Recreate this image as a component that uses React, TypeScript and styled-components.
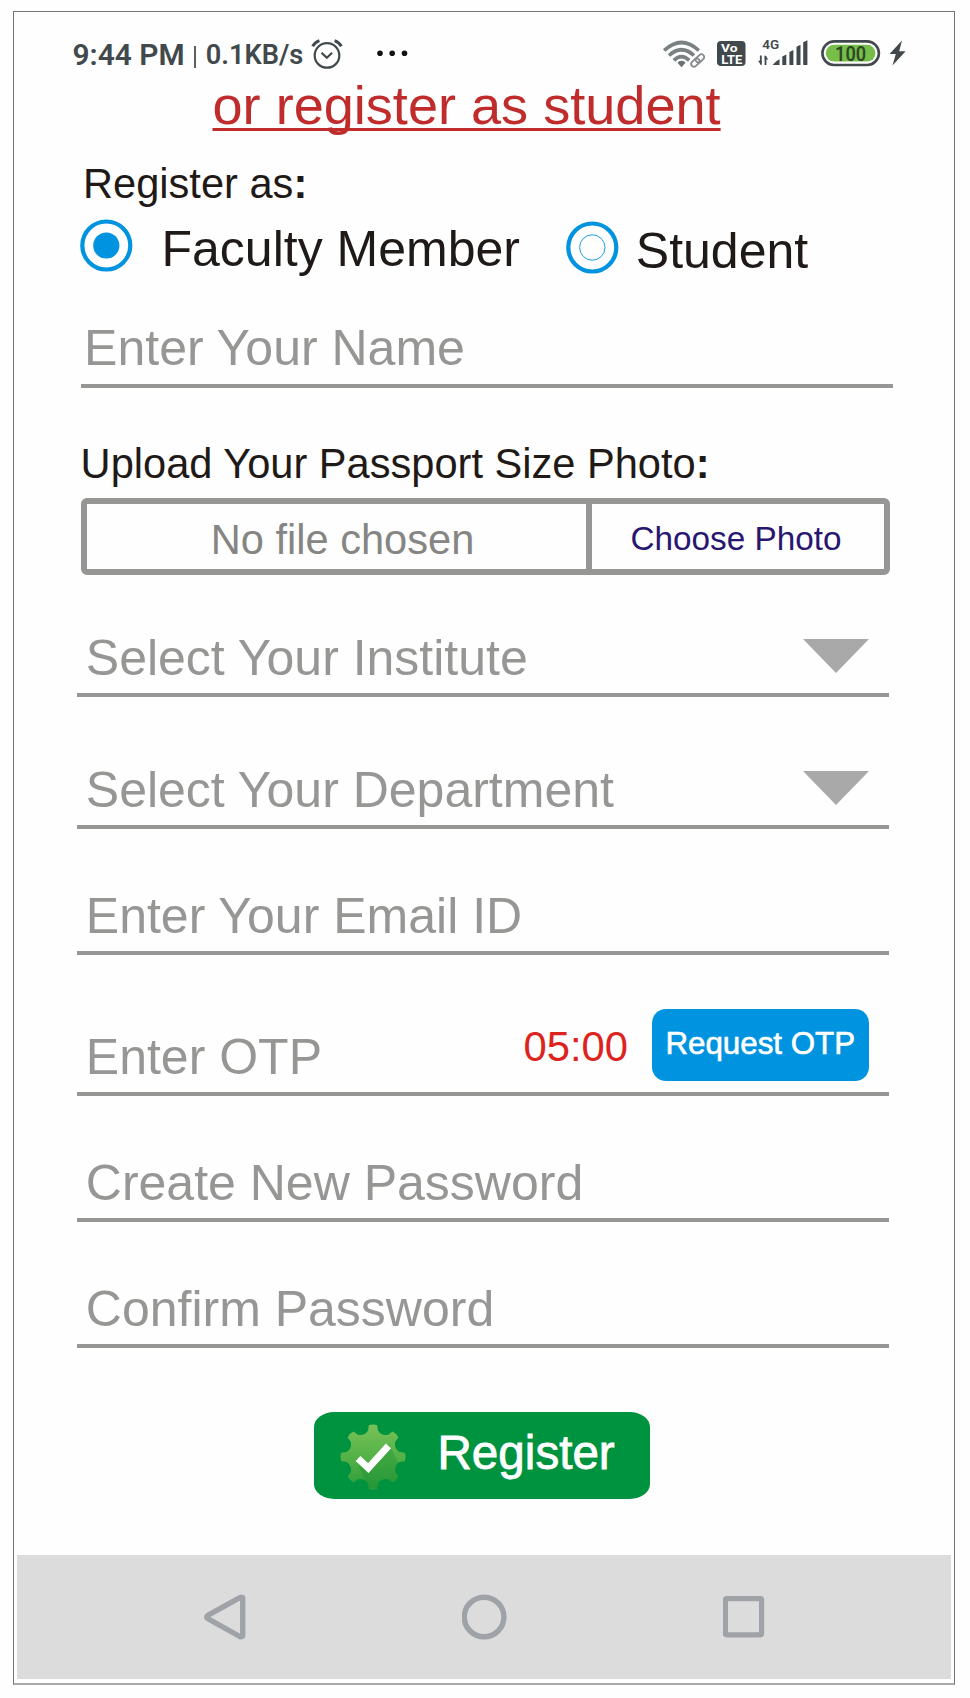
import React from "react";
import styled, { createGlobalStyle } from "styled-components";

const GlobalStyle = createGlobalStyle`
  * { box-sizing: border-box; }
  body { margin: 0; background: #fefefe; font-family: "Liberation Sans", Arial, sans-serif; }
  svg { display: block; flex: none; }
`;

const Page = styled.div`
  padding: 11px 0 13px 13px;
`;

const Screen = styled.main`
  width: 942px;
  height: 1674px;
  display: flex;
  flex-direction: column;
  background: #fefefe;
  border: 1px solid #727476;
  border-bottom: 2px solid #a9a9ab;
`;

const StatusBar = styled.header`
  height: 62px;
  flex: none;
  display: flex;
  align-items: flex-start;
  padding: 23px 48px 0 58.5px;
  color: #41494c;
  font-family: Roboto, sans-serif;
`;

const StatusText = styled.span<{ $size: number; $gap: number; $weight?: number; $line?: number }>`
  font-size: ${(p) => p.$size}px;
  font-weight: ${(p) => p.$weight ?? 600};
  line-height: ${(p) => p.$line ?? 38}px;
  margin-right: ${(p) => p.$gap}px;
  white-space: nowrap;
`;

const Divider = styled.span`
  width: 2px;
  height: 22px;
  margin: 10.5px 10px 0 9px;
  background: #5a6164;
`;

const StatusIcons = styled.div`
  height: 35px;
  margin-left: auto;
  display: flex;
  align-items: flex-end;
`;

const Gap = styled.span<{ $width: number }>`
  width: ${(p) => p.$width}px;
  flex: none;
`;

const Title = styled.a`
  height: 86px;
  padding-left: 198.5px;
  color: #bf2c2b;
  font-size: 54.1px;
  line-height: 62px;
  white-space: nowrap;
  text-decoration: underline;
  text-decoration-thickness: 2.5px;
  text-underline-offset: 3.5px;
  text-decoration-skip-ink: none;
`;

const Form = styled.form`
  display: flex;
  flex-direction: column;
  width: 879px;
  padding-left: 63px;
`;

const Label = styled.div<{ $indent: number; $height: number }>`
  height: ${(p) => p.$height}px;
  padding-left: ${(p) => p.$indent}px;
  display: flex;
  align-items: flex-end;
  font-size: 41.6px;
  line-height: 48px;
  color: #1f1a17;
  white-space: nowrap;
`;

const RadioGroup = styled.div`
  display: flex;
  height: 70px;
  padding: 11px 0 0 2.5px;
  color: #1f1a17;
  font-size: 50px;
  line-height: 60px;
`;

const RadioOption = styled.label<{ $width: number; $gap: number; $top?: number }>`
  display: flex;
  gap: ${(p) => p.$gap}px;
  width: ${(p) => p.$width}px;
  padding-top: ${(p) => p.$top ?? 0}px;
  white-space: nowrap;
`;

const Field = styled.div<{ $height: number; $wide?: boolean }>`
  height: ${(p) => p.$height}px;
  width: 812px;
  margin-left: ${(p) => (p.$wide ? 4 : 0)}px;
  padding: 0 20px ${(p) => (p.$wide ? 11 : 10)}px ${(p) => (p.$wide ? 3.1 : 8.8)}px;
  display: flex;
  align-items: flex-end;
  border-bottom: 4px solid #969694;
`;

const Placeholder = styled.span`
  flex: 1;
  color: #969694;
  font-size: 50px;
  line-height: 50px;
  white-space: nowrap;
`;

const Arrow = styled.svg`
  margin-bottom: 10px;
`;

const FilePicker = styled.div`
  width: 808.5px;
  height: 77px;
  margin: 10px 0 0 4px;
  display: flex;
  border: 6px solid #969694;
  border-radius: 6px;
  line-height: 65px;
  text-align: center;
`;

const FileName = styled.div`
  width: 504.5px;
  padding: 3px 0 0 12.5px;
  border-right: 6px solid #969694;
  color: #858583;
  font-size: 41.6px;
`;

const ChooseButton = styled.div`
  flex: 1;
  padding: 2px 3px 0 0;
  color: #28166f;
  font-size: 33.3px;
`;

const Timer = styled.span`
  margin: 0 23.5px 11px 0;
  color: #dd231d;
  font-size: 41.8px;
  line-height: 48px;
`;

const OtpButton = styled.div`
  width: 217.5px;
  height: 72px;
  margin-bottom: 1px;
  border-radius: 14px;
  background: #0093df;
  color: #fff;
  -webkit-text-stroke: 0.6px #fff;
  font-size: 31.3px;
  line-height: 70px;
  text-align: center;
  white-space: nowrap;
`;

const RegisterButton = styled.div`
  width: 336px;
  height: 87px;
  margin: 64px 0 0 237px;
  padding-left: 25.5px;
  display: flex;
  gap: 32px;
  border-radius: 20px / 15px;
  background: #00933f;
  color: #fff;
  -webkit-text-stroke: 0.8px #fff;
  font-size: 47.6px;
  line-height: 81px;
`;

const GearIcon = styled.svg`
  margin-top: 11.5px;
`;

const NavBar = styled.nav`
  width: 934px;
  height: 124px;
  flex: none;
  margin: auto 0 4px 3px;
  padding: 38px 186px 0;
  display: flex;
  justify-content: space-between;
  background: #dcdcdc;
`;

function gearPath(cx: number, cy: number) {
  const parts: string[] = [];
  const at = (r: number, deg: number) => {
    const a = (deg * Math.PI) / 180;
    return `${(cx + r * Math.cos(a)).toFixed(2)} ${(cy + r * Math.sin(a)).toFixed(2)}`;
  };
  for (let i = 0; i < 8; i++) {
    const c = i * 45 - 90;
    parts.push(`${i ? "L" : "M"}${at(32, c - 7.5)}`);
    parts.push(`Q${at(33.4, c)} ${at(32, c + 7.5)}`);
    parts.push(`L${at(27, c + 10.5)}`);
    parts.push(`Q${at(22.5, c + 22.5)} ${at(27, c + 34.5)}`);
  }
  return parts.join("") + "Z";
}

const AlarmIcon = () => (
  <svg width="32" height="36" viewBox="0 -2.4 32 36" fill="none" stroke="#41494c" strokeWidth="2.2">
    <circle cx="16" cy="18" r="12.3" />
    <path d="M10.5 15.3l5.3 5 5.3-5" />
    <path d="M1.6 8.8Q4 4.8 8.4 3.2M23.6 3.2Q28 4.8 30.4 8.8" strokeWidth="3" />
  </svg>
);

const WifiIcon = () => (
  <svg width="42" height="30" viewBox="0 0 42 30" fill="none" stroke="#7b8183" strokeWidth="3.7">
    <path d="M1.2 10.5Q18.5-5.5 35.8 10.5" />
    <path d="M6 15.5Q18.5 4 31 15.5" />
    <path d="M10.8 20.3Q18.5 13 26.2 20.3" />
    <path d="M18.5 20.8a4.5 3.2 0 0 1 4 2L18.5 27.3 14.5 22.8a4.5 3.2 0 0 1 4-2z" fill="#6c7375" stroke="none" />
    <g transform="rotate(-43 34.5 20.5)" stroke="#fefefe" strokeWidth="5">
      <rect x="27" y="17.5" width="9" height="6.2" rx="3.1" />
      <rect x="33.2" y="17.5" width="9" height="6.2" rx="3.1" />
    </g>
    <g transform="rotate(-43 34.5 20.5)" stroke="#858a8c" strokeWidth="1.8">
      <rect x="26.8" y="17.8" width="9.4" height="5.6" rx="2.8" />
      <rect x="33" y="17.8" width="9.4" height="5.6" rx="2.8" />
    </g>
  </svg>
);

const VolteIcon = () => (
  <svg width="29" height="30" viewBox="0 0 29 30">
    <rect x="0" y="1" width="28.5" height="25" rx="4" fill="#41494c" />
    <g fill="#fff" fontFamily="Roboto, sans-serif" fontWeight="700">
      <text x="4" y="12.2" fontSize="11.5" textLength="16.5" lengthAdjust="spacingAndGlyphs">Vo</text>
      <text x="4.3" y="23.6" fontSize="12.2" textLength="21" lengthAdjust="spacingAndGlyphs">LTE</text>
    </g>
  </svg>
);

const SignalIcon = () => (
  <svg width="50" height="35" viewBox="0 -5 50 35" fill="#41494c">
    <text x="4.2" y="8.8" fontSize="13.5" fontWeight="600" fontFamily="Roboto, sans-serif">4G</text>
    <path d="M2.8 15.5v9M7.5 25v-9" stroke="#41494c" strokeWidth="1.8" />
    <path d="M0 20.8h3.5v4.7zM10.3 19.5H6.8V15z" />
    <path d="M14.5 25Q18 20.5 21.5 19.2V25z" />
    <path d="M24.3 16.4l4-2V25h-4zM31.4 12l4-2V25h-4zM38.5 6.8l4-2V25h-4zM45.2 2.2l4.2-2V25h-4.2z" />
  </svg>
);

const BatteryIcon = () => (
  <svg width="60" height="30" viewBox="0 0 60 30">
    <rect x="1.4" y="1.4" width="56.5" height="23.6" rx="11.8" fill="#fff" stroke="#41494c" strokeWidth="2.6" />
    <rect x="4.8" y="4.8" width="49.6" height="16.8" rx="8.4" fill="#77bd49" />
    <text x="29.6" y="20.6" fontSize="20.5" fontWeight="600" textAnchor="middle" fill="#2c4823" fontFamily="Roboto, sans-serif" textLength="31" lengthAdjust="spacingAndGlyphs">100</text>
  </svg>
);

const BoltIcon = () => (
  <svg width="17" height="30" viewBox="0 0 17 30">
    <path d="M13 .5L.5 14h6.3L3.5 25.5 16.6 11.2h-6.4z" fill="#41494c" />
  </svg>
);

const Radio = ({ checked }: { checked?: boolean }) => (
  <svg width="53" height="53" viewBox="0 0 53 53" fill="none" stroke="#0093df">
    <circle cx="26.3" cy="26.5" r="24" strokeWidth="4.2" />
    {checked ? <circle cx="26.3" cy="26.5" r="13.1" fill="#0093df" stroke="none" /> : <circle cx="26.3" cy="26.5" r="12.7" strokeWidth="0.9" />}
  </svg>
);

const DownArrow = () => (
  <Arrow width="66" height="34" viewBox="0 0 66 34">
    <path d="M0 0h66L33 34z" fill="#a9a9a9" />
  </Arrow>
);

export default function App() {
  return (
    <Page>
      <GlobalStyle />
      <Screen>
        <StatusBar>
          <StatusText $size={29.9} $gap={0} $line={39}>9:44 PM</StatusText>
          <Divider />
          <StatusText $size={27.2} $gap={7.5} $line={41}>0.1KB/s</StatusText>
          <AlarmIcon />
          <svg width="70" height="32" viewBox="0 0 70 32" fill="#101415">
            <circle cx="37" cy="18.3" r="2.8" />
            <circle cx="49.2" cy="18.3" r="2.8" />
            <circle cx="61.5" cy="18.3" r="2.8" />
          </svg>
          <StatusIcons>
            <WifiIcon />
            <Gap $width={12} />
            <VolteIcon />
            <Gap $width={12} />
            <SignalIcon />
            <Gap $width={13} />
            <BatteryIcon />
            <Gap $width={8} />
            <BoltIcon />
          </StatusIcons>
        </StatusBar>
        <Title>or register as student</Title>
        <Form>
          <Label $indent={6} $height={48}>Register as<b>:</b></Label>
          <RadioGroup>
            <RadioOption $width={486.5} $gap={29}>
              <Radio checked />
              Faculty Member
            </RadioOption>
            <RadioOption $width={250} $gap={16.8} $top={2}>
              <Radio />
              Student
            </RadioOption>
          </RadioGroup>
          <Field $height={110} $wide>
            <Placeholder>Enter Your Name</Placeholder>
          </Field>
          <Label $indent={3.6} $height={100}>Upload Your Passport Size Photo<b>:</b></Label>
          <FilePicker>
            <FileName>No file chosen</FileName>
            <ChooseButton>Choose Photo</ChooseButton>
          </FilePicker>
          <Field $height={122}>
            <Placeholder>Select Your Institute</Placeholder>
            <DownArrow />
          </Field>
          <Field $height={132}>
            <Placeholder>Select Your Department</Placeholder>
            <DownArrow />
          </Field>
          <Field $height={126}>
            <Placeholder>Enter Your Email ID</Placeholder>
          </Field>
          <Field $height={141}>
            <Placeholder>Enter OTP</Placeholder>
            <Timer>05:00</Timer>
            <OtpButton>Request OTP</OtpButton>
          </Field>
          <Field $height={126}>
            <Placeholder>Create New Password</Placeholder>
          </Field>
          <Field $height={126}>
            <Placeholder>Confirm Password</Placeholder>
          </Field>
          <RegisterButton>
            <GearIcon width="66" height="66" viewBox="0 0 66 66">
              <defs>
                <linearGradient id="gear" x1="0" y1="0" x2="0" y2="1">
                  <stop offset="0" stopColor="#78c257" />
                  <stop offset="0.55" stopColor="#50b046" />
                  <stop offset="1" stopColor="#2b9b38" />
                </linearGradient>
                <clipPath id="gearShape"><path d={gearPath(33, 33)} /></clipPath>
              </defs>
              <path d={gearPath(33, 33)} fill="url(#gear)" />
              <path d="M15.5 34L28 64H60V42L49 20 28 45z" fill="#168f35" opacity="0.35" clipPath="url(#gearShape)" />
              <path d="M18 34.5l10.3 9.5L48.5 21.8" fill="none" stroke="#fff" strokeWidth="7" />
            </GearIcon>
            Register
          </RegisterButton>
        </Form>
        <NavBar>
          <svg width="44" height="50" viewBox="0.2 0 44 50" fill="none" stroke="#9fa3a8" strokeWidth="5.4" strokeLinejoin="round">
            <path d="M39.9 4.5Q38.6 3.7 37 4.7L5 22.4Q2.7 24 5 25.6L37 43.5Q38.6 44.3 39.9 43z" />
          </svg>
          <svg width="46" height="50" viewBox="0.4 0 46 50" fill="none" stroke="#9fa3a8" strokeWidth="5.4">
            <circle cx="22.5" cy="24" r="19.8" />
          </svg>
          <svg width="42" height="50" viewBox="0.4 0 42 50" fill="none" stroke="#9fa3a8" strokeWidth="5.2">
            <rect x="2.8" y="5.6" width="36.2" height="36.2" rx="1" />
          </svg>
        </NavBar>
      </Screen>
    </Page>
  );
}
